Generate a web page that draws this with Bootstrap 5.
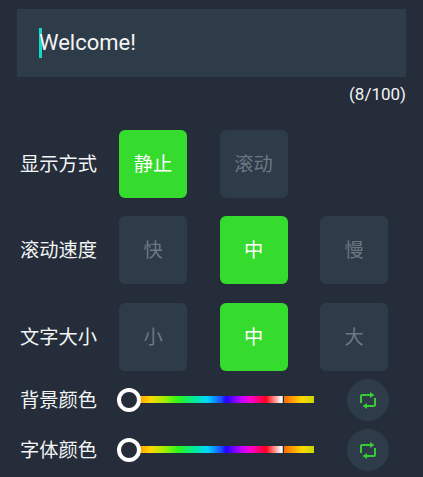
<!DOCTYPE html>
<html lang="zh">
<head>
<meta charset="utf-8">
<title>显示设置</title>
<link href="https://cdn.jsdelivr.net/npm/bootstrap@5.3.0/dist/css/bootstrap.min.css" rel="stylesheet">
<style>
html,body{height:100%;overflow:hidden}
body{background:#242d39;font-family:Roboto,"Noto Sans CJK SC",sans-serif;color:#f2f4f5}
.shell{padding:9px 17px 0 20px;width:423px}
.entry{background:#2e3b49;height:68px;margin-left:-3px;width:389px;padding-left:22px;font-size:22px;line-height:1}
.caret-bar{width:3px;height:30px;background:#12d8c4;margin-right:-3px}
.count{font-size:17px;line-height:20px;margin-top:7px;height:46px;width:386px}
.opt-row{height:68px;margin-bottom:18px}
.opt-row.mid{margin-bottom:19px}
.opt-row.last{margin-bottom:4px}
.lbl{width:99px;flex:none;font-size:19.25px;line-height:1;font-family:"Noto Sans CJK SC",sans-serif}
.opts{display:grid;grid-template-columns:68px 68px 68px;column-gap:32.5px}
.opt{width:68px;height:68px;border-radius:6px;background:#2e3b49;color:#6d7782;font-size:19.25px;padding:0 0 2px;border:0;font-family:"Noto Sans CJK SC",sans-serif}
.opt.on{background:#35dc2d;color:#fff}
.slide-row{height:50px}
.slide-wrap{width:195px;height:24px;position:relative;flex:none}
.rail{margin-left:10px;margin-top:8px;height:7px;width:185px;display:flex;gap:1px}
.rail-a{width:154px;background:linear-gradient(90deg,#ff6a00 0,#ffd800 14%,#a0f000 23%,#2bf51c 32%,#00e8a0 43%,#00d8ff 51%,#1a4dff 60%,#2200ff 63%,#c000ff 73%,#ff00d0 79%,#ff0020 89%,#ff5050 92%,#ffffff 99%,#aaaaaa 100%)}
.rail-b{flex:1;background:linear-gradient(90deg,#ff6a00 0,#ffd800 60%,#c8d800 100%)}
.knob{position:absolute;left:-2px;top:0;width:24px;height:24px;border:4px solid #fff;border-radius:50%;background:#242d39}
.cycle{width:42px;height:42px;border-radius:50%;background:#2e3b49;margin-left:33px;flex:none;border:0;padding:0}
.cycle svg{display:block;margin:auto}
</style>
</head>
<body>
<div class="shell">
  <div class="entry d-flex align-items-center"><span class="caret-bar"></span><span>Welcome!</span></div>
  <div class="count text-end">(8/100)</div>

  <div class="opt-row d-flex align-items-center">
    <div class="lbl">显示方式</div>
    <div class="opts"><button class="opt on">静止</button><button class="opt">滚动</button></div>
  </div>
  <div class="opt-row mid d-flex align-items-center">
    <div class="lbl">滚动速度</div>
    <div class="opts"><button class="opt">快</button><button class="opt on">中</button><button class="opt">慢</button></div>
  </div>
  <div class="opt-row last d-flex align-items-center">
    <div class="lbl">文字大小</div>
    <div class="opts"><button class="opt">小</button><button class="opt on">中</button><button class="opt">大</button></div>
  </div>

  <div class="slide-row d-flex align-items-center">
    <div class="lbl">背景颜色</div>
    <div class="slide-wrap"><div class="rail"><div class="rail-a"></div><div class="rail-b"></div></div><div class="knob"></div></div>
    <button class="cycle" aria-label="切换"><svg width="16" height="17" viewBox="0 0 16 17" fill="none" stroke="#35cc35" stroke-width="2"><path d="M1 11V4a1 1 0 0 1 1-1H11"/><path d="M10 0l4.500 3L10 6z" fill="#35cc35" stroke="none"/><path d="M15 6v7a1 1 0 0 1-1 1H5"/><path d="M7 11l-4.500 3L7 17z" fill="#35cc35" stroke="none"/></svg></button>
  </div>
  <div class="slide-row d-flex align-items-center">
    <div class="lbl">字体颜色</div>
    <div class="slide-wrap"><div class="rail"><div class="rail-a"></div><div class="rail-b"></div></div><div class="knob"></div></div>
    <button class="cycle" aria-label="切换"><svg width="16" height="17" viewBox="0 0 16 17" fill="none" stroke="#35cc35" stroke-width="2"><path d="M1 11V4a1 1 0 0 1 1-1H11"/><path d="M10 0l4.500 3L10 6z" fill="#35cc35" stroke="none"/><path d="M15 6v7a1 1 0 0 1-1 1H5"/><path d="M7 11l-4.500 3L7 17z" fill="#35cc35" stroke="none"/></svg></button>
  </div>
</div>
<script src="https://cdn.jsdelivr.net/npm/bootstrap@5.3.0/dist/js/bootstrap.bundle.min.js"></script>
</body>
</html>
